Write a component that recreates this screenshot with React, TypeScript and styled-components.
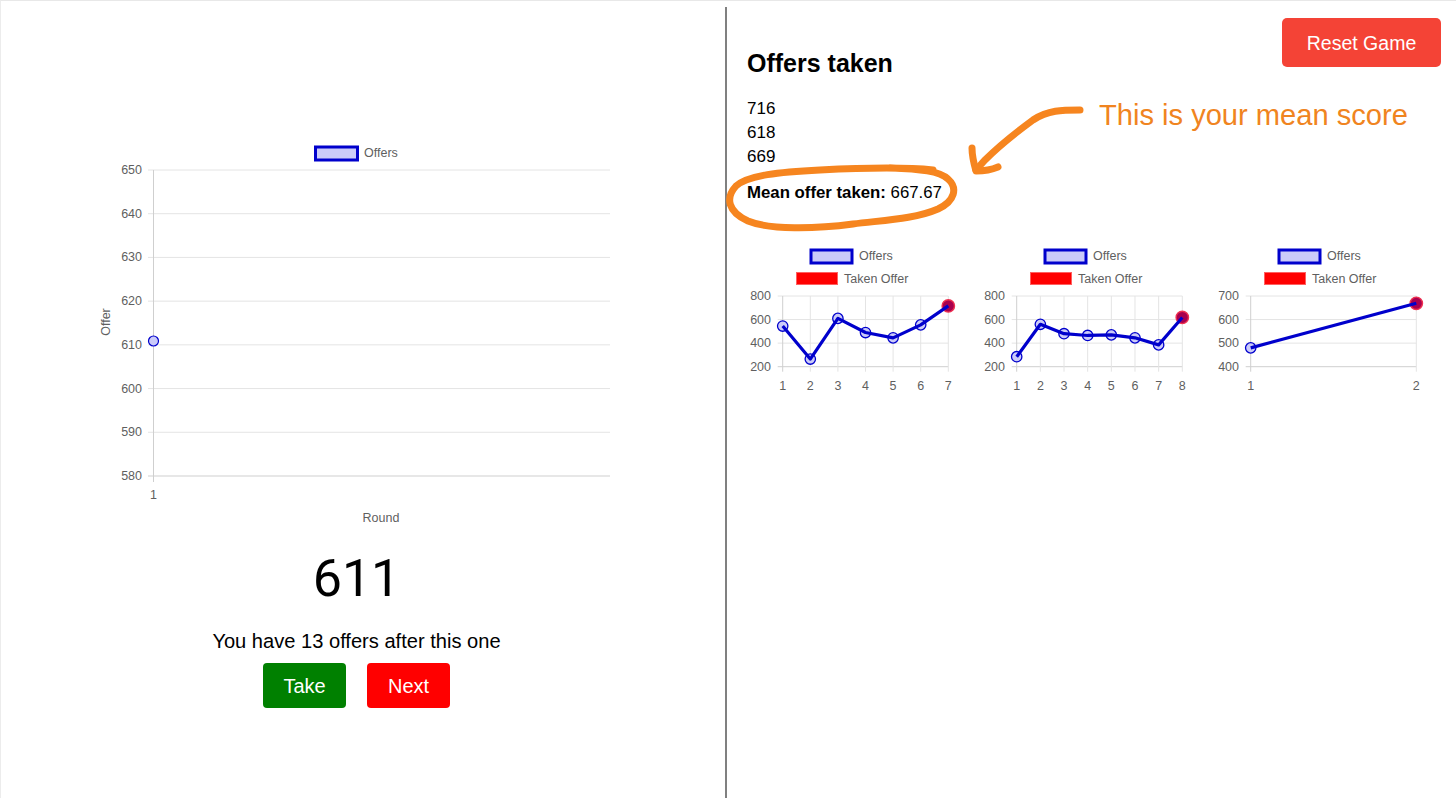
import React, { FC } from 'react'
import styled, { createGlobalStyle } from 'styled-components'

const BLUE = '#0000cc'
const POINT_FILL = '#cbcbf9'
const GRID = '#e4e4e4'
const AXIS = '#cfcfcf'
const TICK = '#5f5f5f'
const ORANGE = '#f6851f'

const GlobalStyle = createGlobalStyle`
  html, body { margin: 0; padding: 0; background: #fff; }
  body { font-family: "Liberation Sans", Arial, sans-serif; color: #000; }
`

const Page = styled.div`
  display: flex;
  width: 1456px;
  height: 798px;
  box-sizing: border-box;
  border-top: 1px solid #e8e8e8;
  border-left: 1px solid #ececec;
  overflow: hidden;
`

const GamePanel = styled.div`
  width: 724px;
  flex: none;
  box-sizing: border-box;
  padding: 139px 13px 0 0;
  display: flex;
  flex-direction: column;
  align-items: center;
`

const ResultsPanel = styled.div`
  position: relative;
  flex: 1;
  margin-top: 6px;
  box-sizing: border-box;
  border-left: 2px solid #808080;
  padding: 11px 15px 0 20px;
`

const ChartSvg = styled.svg`
  display: block;
  font-family: "Liberation Sans", Arial, sans-serif;
  font-size: 12.5px;
`

// Roboto here because the Liberation "1" has a foot that the reference digit lacks
const CurrentOffer = styled.div`
  margin-top: 24px;
  font-family: Roboto, "Liberation Sans", sans-serif;
  font-size: 52px;
  line-height: 60px;
`

const OffersLeft = styled.div`
  margin-top: 20px;
  font-size: 20.1px;
  line-height: 24px;
`

const ButtonRow = styled.div`
  display: flex;
  gap: 21px;
  margin-top: 10px;
`

const Button = styled.button<{ $bg: string }>`
  width: 83px;
  height: 45px;
  padding: 2px 0 0;
  border: 0;
  border-radius: 4px;
  background: ${(p) => p.$bg};
  color: #fff;
  font-family: inherit;
  font-size: 20px;
`

const Header = styled.div`
  display: flex;
  justify-content: space-between;
  align-items: flex-start;
`

const Title = styled.h2`
  margin: 30px 0 0;
  font-size: 25px;
  line-height: 30px;
  font-weight: 700;
`

const ResetButton = styled.button`
  width: 159px;
  height: 49px;
  padding: 2px 0 0;
  border: 0;
  border-radius: 5px;
  background: #f44336;
  color: #fff;
  font-family: inherit;
  font-size: 19.5px;
`

const TakenList = styled.div`
  margin-top: 19px;
  font-size: 17px;
  line-height: 24px;
`

const MeanLine = styled.div`
  margin-top: 12px;
  font-size: 16.8px;
  line-height: 24px;
`

const ChartGrid = styled.div`
  display: flex;
  gap: 14px;
  margin-top: 40px;
`

const AnnotationLayer = styled.svg`
  position: absolute;
  left: -2px;
  top: 0;
  pointer-events: none;
`

const AnnotationText = styled.div`
  position: absolute;
  left: 372px;
  top: 90px;
  font-size: 29.1px;
  line-height: 36px;
  color: #f08420;
  white-space: nowrap;
`

const BigChart: FC = () => {
  const ticks = [650, 640, 630, 620, 610, 600, 590, 580]
  const left = 153.5
  const right = 610
  const yFor = (v: number) => 170 + ((650 - v) / 70) * 306
  return (
    <ChartSvg width={521} height={385} viewBox="96 140 521 385">
      <rect x={315.5} y={147} width={42} height={13} fill={POINT_FILL} stroke={BLUE} strokeWidth={3} />
      <text x={364} y={157} fill={TICK}>Offers</text>
      {ticks.map((t) => (
        <g key={t}>
          <line x1={148} x2={right} y1={yFor(t)} y2={yFor(t)} stroke={t === 580 ? AXIS : GRID} />
          <text x={142} y={yFor(t) + 4} fill={TICK} textAnchor="end">{t}</text>
        </g>
      ))}
      <line x1={left} x2={left} y1={170} y2={482} stroke={AXIS} />
      <text transform="translate(110 322) rotate(-90)" fill={TICK} textAnchor="middle">Offer</text>
      <text x={left} y={499} fill={TICK} textAnchor="middle">1</text>
      <text x={381} y={522} fill={TICK} textAnchor="middle">Round</text>
      <circle cx={left} cy={341} r={5} fill={POINT_FILL} stroke={BLUE} strokeWidth={1.2} />
    </ChartSvg>
  )
}

type SmallChartProps = {
  values: number[]
  ticks: number[]
}

const SmallChart: FC<SmallChartProps> = ({ values, ticks }) => {
  const x0 = 35.7
  const x1 = 201.3
  const top = 51
  const bottom = 121.7
  const max = ticks[0]
  const min = ticks[ticks.length - 1]
  const xFor = (i: number) => x0 + (i * (x1 - x0)) / (values.length - 1)
  const yFor = (v: number) => top + ((max - v) / (max - min)) * (bottom - top)
  const last = values.length - 1
  return (
    <ChartSvg width={220} height={150} viewBox="0 0 220 150">
      <rect x={64} y={5} width={41} height={13} fill={POINT_FILL} stroke={BLUE} strokeWidth={3} />
      <text x={112} y={15} fill={TICK}>Offers</text>
      <rect x={49.5} y={27.5} width={41} height={12} fill="#ff0000" stroke="#ff6060" />
      <text x={97} y={38} fill={TICK}>Taken Offer</text>
      {ticks.map((t) => (
        <g key={t}>
          <line x1={x0 - 5} x2={x1} y1={yFor(t)} y2={yFor(t)} stroke={t === min ? AXIS : GRID} />
          <text x={24} y={yFor(t) + 4} fill={TICK} textAnchor="end">{t}</text>
        </g>
      ))}
      {values.map((_, i) => (
        <g key={i}>
          <line x1={xFor(i)} x2={xFor(i)} y1={top} y2={bottom + 5} stroke={i === 0 ? AXIS : GRID} />
          <text x={xFor(i)} y={145} fill={TICK} textAnchor="middle">{i + 1}</text>
        </g>
      ))}
      {values.map((v, i) => (
        <circle key={i} cx={xFor(i)} cy={yFor(v)} r={5.2} fill={POINT_FILL} stroke={BLUE} strokeWidth={1.3} />
      ))}
      <circle cx={xFor(last)} cy={yFor(values[last])} r={6.2} fill="#a8004e" stroke="#ee3050" strokeWidth={1.4} />
      <polyline
        points={values.map((v, i) => `${xFor(i)},${yFor(v)}`).join(' ')}
        fill="none"
        stroke={BLUE}
        strokeWidth={3.2}
        strokeLinejoin="round"
      />
    </ChartSvg>
  )
}

const Annotations: FC = () => (
  <AnnotationLayer width={729} height={240} viewBox="725 7 729 240">
    <path
      d="M933 170 C905 167 860 168 820 170 C780 172 748 175 736 186 C725 198 728 212 748 221 C770 230 815 229 853 224 C885 220 915 219 938 209 C955 201 958 188 948 179 C940 171 920 169 890 168"
      fill="none"
      stroke={ORANGE}
      strokeWidth={7}
      strokeLinecap="round"
    />
    <path
      d="M1080 110 C1062 110 1048 110 1033 120 C1018 131 1000 145 985 160 L976 170"
      fill="none"
      stroke={ORANGE}
      strokeWidth={7}
      strokeLinecap="round"
    />
    <path
      d="M972 148 C972 156 974 164 976 171 C984 171 991 170 998 167"
      fill="none"
      stroke={ORANGE}
      strokeWidth={7}
      strokeLinecap="round"
      strokeLinejoin="round"
    />
  </AnnotationLayer>
)

export default function App() {
  return (
    <Page>
      <GlobalStyle />
      <GamePanel>
        <BigChart />
        <CurrentOffer>611</CurrentOffer>
        <OffersLeft>You have 13 offers after this one</OffersLeft>
        <ButtonRow>
          <Button $bg="#008000">Take</Button>
          <Button $bg="#ff0000">Next</Button>
        </ButtonRow>
      </GamePanel>
      <ResultsPanel>
        <Header>
          <Title>Offers taken</Title>
          <ResetButton>Reset Game</ResetButton>
        </Header>
        <TakenList>
          <div>716</div>
          <div>618</div>
          <div>669</div>
        </TakenList>
        <MeanLine>
          <b>Mean offer taken:</b> 667.67
        </MeanLine>
        <ChartGrid>
          <SmallChart values={[545, 265, 610, 490, 445, 555, 716]} ticks={[800, 600, 400, 200]} />
          <SmallChart values={[285, 560, 480, 465, 470, 445, 385, 618]} ticks={[800, 600, 400, 200]} />
          <SmallChart values={[480, 669]} ticks={[700, 600, 500, 400]} />
        </ChartGrid>
        <Annotations />
        <AnnotationText>This is your mean score</AnnotationText>
      </ResultsPanel>
    </Page>
  )
}
